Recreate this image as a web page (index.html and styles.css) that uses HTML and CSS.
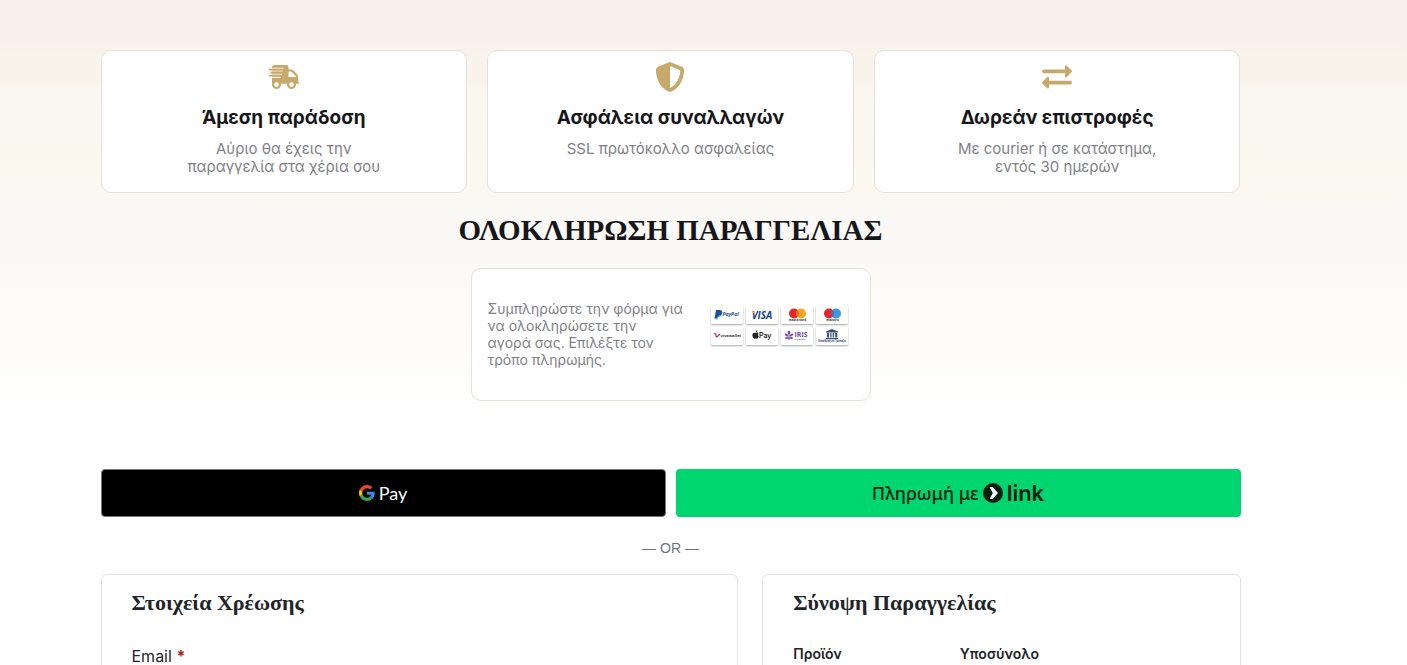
FILE: index.html
```html
<!DOCTYPE html>
<html lang="el">
  <head>
    <meta charset="UTF-8" />
    <meta name="viewport" content="width=device-width, initial-scale=1.0" />
    <title>Ολοκλήρωση Παραγγελίας</title>
    <link rel="stylesheet" href="styles.css">
  </head>
  <body>
    <main class="container">
      <section class="features">
        <div class="feature">
          <svg class="feature-icon" viewBox="0 0 30 30" aria-hidden="true">
            <g fill="#c7a96b">
              <path d="M3 5q0-2 2-2h12.500q2 0 2 2v2.500h2.700q1.200 0 2 .8l4 4q.8.800.8 2v5.500h.2q.8 0 .8 1t-.8 1H3z" />
              <circle cx="7.500" cy="22.500" r="4.500" />
              <circle cx="22.500" cy="22.500" r="4.500" />
            </g>
            <path fill="#fff" d="M19.500 9.500h2.600l4.900 4.900v.6h-7.500z" />
            <circle fill="#fff" cx="7.500" cy="22.500" r="2.300" />
            <circle fill="#fff" cx="22.500" cy="22.500" r="2.300" />
            <path fill="#fff" d="M0 5.800h14.300v1H0zM0 8.600h13.700v1H0zM0 11.700h13v1H0zM0 14.700h12v1H0z" />
            <path fill="#c7a96b" d="M0 6.800h13.500v1.800H0zM1.500 9.800h11.500v1.800H1.500zM0 12.800h11.500v1.800H0z" />
          </svg>
          <h2>Άμεση παράδοση</h2>
          <p>Αύριο θα έχεις την παραγγελία στα χέρια σου</p>
        </div>
        <div class="feature">
          <svg class="feature-icon" viewBox="0 0 512 512" aria-hidden="true">
            <path fill="#c7a96b" d="M256 0c4.600 0 9.200 1 13.400 2.900l188.300 79.900c22 9.300 38.400 31 38.300 57.200-.5 99.200-41.300 280.700-213.600 363.200-16.700 8-36.100 8-52.800 0C57.300 420.700 16.500 239.200 16 140c-.1-26.200 16.300-47.900 38.300-57.200L242.700 2.900C246.800 1 251.400 0 256 0zm0 66.800v378.100c138-66.800 175.100-214.800 176-303.400z" />
          </svg>
          <h2>Ασφάλεια συναλλαγών</h2>
          <p>SSL πρωτόκολλο ασφαλείας</p>
        </div>
        <div class="feature">
          <svg class="feature-icon" viewBox="0 0 30 30" aria-hidden="true">
            <g fill="none" stroke="#c7a96b" stroke-width="3.800" stroke-linecap="round">
              <path d="M2 9.300h22M28 20.700H6" />
            </g>
            <g fill="#c7a96b" stroke="#c7a96b" stroke-width="2" stroke-linejoin="round">
              <path d="M24 4.400v9.800l5-4.900zM6 15.800v9.800l-5-4.900z" />
            </g>
          </svg>
          <h2>Δωρεάν επιστροφές</h2>
          <p>Με courier ή σε κατάστημα, εντός 30 ημερών</p>
        </div>
      </section>

      <h1 class="page-title">ΟΛΟΚΛΗΡΩΣΗ ΠΑΡΑΓΓΕΛΙΑΣ</h1>

      <section class="notice">
        <p>Συμπληρώστε την φόρμα για να ολοκληρώσετε την αγορά σας. Επιλέξτε τον τρόπο πληρωμής.</p>
        <div class="methods">
          <svg class="method" viewBox="0 0 32 18" role="img" aria-label="PayPal">
            <path fill="#1f4e9e" d="M5 4h4q3 .5 2 3.500-.8 2.500-4 2.500l-.6 2.500H3.500z" />
            <path fill="#2997d8" d="M10.800 6q1.200 4.500-3.800 5l-.7 2.500H4.500l.3-1h1.500l.7-2.500q3.500 0 3.800-4z" />
            <text x="11.500" y="10" class="logo italic" font-size="5" fill="#1f4e9e">PayPal</text>
          </svg>
          <svg class="method" viewBox="0 0 32 18" role="img" aria-label="Visa">
            <text x="16" y="12.500" class="logo italic" text-anchor="middle" font-size="10" fill="#1d3f86">VISA</text>
            <path fill="#efa92d" d="M5.500 5.300h2.500l1.200 3z" />
          </svg>
          <svg class="method" viewBox="0 0 32 18" role="img" aria-label="Mastercard">
            <circle cx="13" cy="7.500" r="5" fill="#e4262c" />
            <circle cx="20" cy="7.500" r="5" fill="#f7a51d" />
            <path fill="#f0642a" d="M16.500 4a5 5 0 0 1 0 7 5 5 0 0 1 0-7z" />
            <text x="16.500" y="15" class="logo" text-anchor="middle" font-size="3" fill="#333">mastercard</text>
          </svg>
          <svg class="method" viewBox="0 0 32 18" role="img" aria-label="Maestro">
            <circle cx="13" cy="7.500" r="5" fill="#e4262c" />
            <circle cx="20" cy="7.500" r="5" fill="#3a9ae0" />
            <path fill="#6b5cb0" d="M16.500 4a5 5 0 0 1 0 7 5 5 0 0 1 0-7z" />
            <text x="16.500" y="15" class="logo" text-anchor="middle" font-size="3" fill="#333">maestro</text>
          </svg>
          <svg class="method" viewBox="0 0 32 18" role="img" aria-label="Viva Wallet">
            <path fill="none" stroke="#c33b58" stroke-width="1.300" d="M3 7q2-1 2 1.500T7 9t2-2" />
            <text x="9.500" y="10" class="logo" font-size="4" fill="#333">vivawallet</text>
          </svg>
          <svg class="method" viewBox="0 0 32 18" role="img" aria-label="Apple Pay">
            <path fill="#222" d="M9.500 6q2-1 3 .4-1.400 1.300.3 3-.8 2.400-2 2.400l-1.200-.3-1.200.3C6.800 11.500 5.300 7 7.600 6zm.1-.5q0-1.800 1.700-2.200.1 2-1.700 2.200z" />
            <text x="13" y="11" class="pay-name" font-size="7" fill="#222">Pay</text>
          </svg>
          <svg class="method" viewBox="0 0 32 18" role="img" aria-label="IRIS payments">
            <g fill="#8350a8">
              <ellipse cx="8" cy="5.500" rx="1.300" ry="2" />
              <ellipse cx="5.500" cy="8" rx="2" ry="1.100" transform="rotate(35 5.500 8)" />
              <ellipse cx="10.500" cy="8" rx="2" ry="1.100" transform="rotate(-35 10.500 8)" />
              <ellipse cx="6" cy="11" rx="2" ry="1.100" />
              <ellipse cx="10" cy="11" rx="2" ry="1.100" />
              <path d="M7.500 7h1v6h-1z" />
            </g>
            <text x="13.500" y="10" class="logo" font-size="7" fill="#7a4aa0">IRIS</text>
            <text x="13.500" y="13" class="logo" font-size="2" fill="#7a4aa0">PAYMENTS</text>
          </svg>
          <svg class="method" viewBox="0 0 32 18" role="img" aria-label="Κατάθεση σε Τράπεζα">
            <path fill="#34507c" d="M16 2l6 2.500v1H10v-1zM10 11h12v1.200H10zM11 6h2v4.500h-2zM14.200 6h1.300v4.500h-1.300zM16.700 6H18v4.500h-1.300zM19.200 6h2v4.500h-2z" />
            <text x="16" y="15" class="logo" text-anchor="middle" font-size="2.500" fill="#34507c">Κατάθεση σε Τράπεζα</text>
          </svg>
        </div>
      </section>

      <section class="express">
        <button type="button" class="express-button gpay" aria-label="Google Pay">
          <svg class="google" viewBox="0 0 48 48" aria-hidden="true">
            <path fill="#ea4335" d="M24 9.500c3.500 0 6.700 1.200 9.200 3.600l6.900-6.900C35.900 2.400 30.500 0 24 0 14.600 0 6.500 5.400 2.600 13.200l8 6.200C12.400 13.700 17.700 9.500 24 9.500z" />
            <path fill="#4285f4" d="M47 24.600c0-1.600-.2-3.100-.4-4.600H24v9h12.900c-.6 3-2.300 5.500-4.800 7.200l7.700 6C44.400 38 47 32.100 47 24.600z" />
            <path fill="#fbbc05" d="M10.500 28.600a14.500 14.500 0 0 1 0-9.200l-8-6.200a24 24 0 0 0 0 21.600z" />
            <path fill="#34a853" d="M24 48c6.500 0 11.900-2.100 15.900-5.800l-7.700-6c-2.200 1.500-4.900 2.300-8.200 2.300-6.300 0-11.600-4.200-13.500-9.900l-8 6.200C6.500 42.600 14.600 48 24 48z" />
          </svg>
          <span>Pay</span>
        </button>
        <button type="button" class="express-button link">
          <span>Πληρωμή με</span>
          <svg class="link-mark" viewBox="0 0 20 20" aria-hidden="true">
            <circle cx="10" cy="10" r="10" fill="#011e0f" />
            <path fill="#fff" d="M6.500 4h3.300l5.200 6-5.200 6H6.500l3.300-6z" />
          </svg>
          <span class="link-name">link</span>
        </button>
      </section>
      <p class="separator">— OR —</p>

      <div class="checkout">
        <form class="panel">
          <h3>Στοιχεία Χρέωσης</h3>
          <label for="email">Email <abbr class="required">*</abbr></label>
          <input type="email" id="email" />
        </form>
        <section class="panel">
          <h3>Σύνοψη Παραγγελίας</h3>
          <table>
            <thead>
              <tr>
                <th scope="col">Προϊόν</th>
                <th scope="col">Υποσύνολο</th>
              </tr>
            </thead>
          </table>
        </section>
      </div>
    </main>
  </body>
</html>
```
FILE: styles.css
```css
* {
  margin: 0;
  padding: 0;
  box-sizing: border-box;
}
body {
  padding-right: 66px;
  background: #fff linear-gradient(#faf0eb 0, #faf0eb 45px, #f8f3eb 52px, #f8f3eb 78px, #faf7f0 90px, #fbf8f0 185px, #f9f8f4 215px, #fcfbf9 310px, #fff 430px) no-repeat;
  font-family: Inter, "Liberation Sans", sans-serif;
  color: #212529;
}
.container {
  max-width: 1140px;
  margin: 0 auto;
  padding-top: 50px;
}
.features {
  display: grid;
  grid-template-columns: repeat(3, 1fr);
  gap: 20px;
}
.feature,
.notice,
.panel {
  background-color: #fff;
  border: 1px solid #e6e1da;
}
.feature {
  display: flex;
  flex-direction: column;
  align-items: center;
  padding: 11px 16px 16px;
  border-radius: 10px;
  text-align: center;
}
.feature-icon {
  width: 30px;
  height: 30px;
}
.feature h2 {
  margin: 14px 0 10px;
  font-size: 19px;
  line-height: 24px;
  font-weight: 700;
  color: #16161a;
}
.feature p {
  max-width: 216px;
  font-size: 15px;
  line-height: 18px;
  color: #7f7f88;
}
.page-title {
  margin: 18px 0;
  font-family: "Liberation Serif", serif;
  font-size: 29px;
  line-height: 39px;
  text-align: center;
  color: #16161a;
}
.notice {
  display: flex;
  align-items: center;
  justify-content: space-between;
  max-width: 400px;
  min-height: 133px;
  margin: 0 auto 68px;
  padding: 14px 22px 16px 16px;
  border-radius: 10px;
}
.notice p {
  width: 196px;
  font-size: 14px;
  line-height: 17px;
  color: #7f7f88;
}
.methods {
  display: grid;
  grid-template-columns: repeat(4, 32px);
  gap: 3px;
  margin-bottom: 16px;
}
.method {
  height: 18px;
  background-color: #fff;
  border-radius: 1px;
  box-shadow: 0 1px 2px rgba(0, 0, 0, 0.35);
}
.logo {
  font-family: "Open Sans", sans-serif;
  font-weight: 700;
}
.pay-name {
  font-family: Inter, sans-serif;
  font-weight: 600;
}
.italic {
  font-style: italic;
}
.express {
  display: grid;
  grid-template-columns: 1fr 1fr;
  gap: 10px;
}
.express-button {
  display: flex;
  align-items: center;
  justify-content: center;
  height: 48px;
  border: none;
  border-radius: 4px;
  cursor: pointer;
}
.gpay {
  gap: 4px;
  border: 1px solid #747775;
  background-color: #000;
  font-family: Lato, sans-serif;
  font-size: 18px;
  color: #fff;
}
.google {
  width: 16px;
  height: 16px;
}
.link {
  gap: 4px;
  background-color: #00d66f;
  font-family: "Noto Sans", sans-serif;
  font-size: 18px;
  font-weight: 500;
  color: #011e0f;
}
.link-mark {
  width: 20px;
  height: 20px;
}
.link-name {
  font-family: Inter, sans-serif;
  font-size: 22px;
  font-weight: 600;
}
.separator {
  margin: 23px 0 18px;
  font-family: "Liberation Sans", sans-serif;
  font-size: 14px;
  line-height: 16px;
  text-align: center;
  color: #6d7580;
}
.checkout {
  display: grid;
  grid-template-columns: 4fr 3fr;
  gap: 24px;
}
.panel {
  padding: 15px 30px;
  border-radius: 6px;
}
.panel h3 {
  margin-bottom: 28px;
  font-family: "Liberation Serif", serif;
  font-size: 22px;
  line-height: 26px;
}
.panel label {
  display: block;
  font-size: 16px;
  line-height: 24px;
}
.required {
  font-weight: 700;
  color: #b3151b;
}
.panel input {
  width: 100%;
  height: 44px;
  margin-top: 8px;
  padding: 0 12px;
  border: 1px solid #e6e1da;
  border-radius: 4px;
  font: inherit;
}
.panel table {
  width: 100%;
  border-collapse: collapse;
}
.panel th {
  font-size: 14px;
  line-height: 20px;
  font-weight: 600;
  text-align: left;
}
.panel th:first-child {
  width: 40%;
}
```
